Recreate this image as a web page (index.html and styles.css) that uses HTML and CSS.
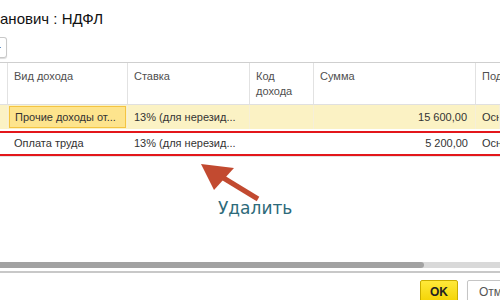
FILE: index.html
```html
<!DOCTYPE html>
<html>
<head>
<meta charset="utf-8">
<link rel="stylesheet" href="styles.css">
</head>
<body>
<div class="page">
  <div class="title">анович : НДФЛ</div>
  <div class="toolbar"><div class="tbtn"><span class="tdot"></span></div></div>
  <div class="grid">
    <div class="row head">
      <div class="c c0"></div>
      <div class="c c1">Вид дохода</div>
      <div class="c c2">Ставка</div>
      <div class="c c3">Код<br>дохода</div>
      <div class="c c4">Сумма</div>
      <div class="c c5">Под</div>
    </div>
    <div class="row sel">
      <div class="c c0"></div>
      <div class="c c1"><span class="cur">Прочие доходы от...</span></div>
      <div class="c c2">13% (для нерезид...</div>
      <div class="c c3"></div>
      <div class="c c4 num">15 600,00</div>
      <div class="c c5">Осн</div>
    </div>
    <div class="row r2">
      <div class="c c0"></div>
      <div class="c c1">Оплата труда</div>
      <div class="c c2">13% (для нерезид...</div>
      <div class="c c3"></div>
      <div class="c c4 num">5 200,00</div>
      <div class="c c5">Осн</div>
      <div class="redbox"></div>
    </div>
    <div class="empty">
      <svg class="arrow" width="70" height="45" viewBox="0 0 70 45">
        <line x1="12" y1="9" x2="58" y2="37" stroke="#c24a30" stroke-width="5"/>
        <polygon points="1,2 34,6 14,28" fill="#c24a30"/>
      </svg>
      <div class="note">Удалить</div>
    </div>
    <div class="scroll"><div class="thumb"></div></div>
  </div>
  <div class="footer">
    <div class="ok">OK</div>
    <div class="cancel">Отмена</div>
  </div>
</div>
</body>
</html>
```
FILE: styles.css
```css
html, body { margin: 0; padding: 0; background: #fff; }
.page { width: 500px; height: 300px; overflow: hidden; font-family: "Liberation Sans", Arial, sans-serif; position: relative; }
.title { font-size: 15px; color: #111; height: 30px; padding: 10px 0 0 0; box-sizing: border-box; line-height: 18px; }
.toolbar { height: 32px; padding-top: 7px; box-sizing: border-box; }
.tbtn { width: 9px; height: 21px; margin-left: -2px; border: 1px solid #c8c8c8; border-left: none; border-radius: 0 3px 3px 0; box-sizing: border-box; position: relative; box-shadow: 0 1px 1px rgba(0,0,0,0.15); }
.tdot { position: absolute; left: 1px; top: 9px; width: 2px; height: 1px; background: #5d8fc7; }
.grid { border-top: 1px solid #cfcfcf; }
.row { display: flex; position: relative; }
.c { box-sizing: border-box; font-size: 11px; color: #333; padding: 0 6px; white-space: nowrap; overflow: hidden; }
.c0 { width: 8px; padding: 0; }
.c1 { width: 120px; }
.c2 { width: 122px; }
.c3 { width: 64px; }
.c4 { width: 162px; }
.c5 { flex: 1; }
.head { height: 41px; border-bottom: 1px solid #e0e0e0; }
.head .c { color: #4f4f4f; padding-top: 6px; line-height: 15px; border-right: 1px solid #e2e2e2; }
.head .c5 { border-right: none; }
.sel { height: 24px; background: #fbf2c4; }
.sel .c { line-height: 24px; border-right: 1px solid #f6efd8; }
.sel .c1 { padding: 1px 1px; }
.cur { display: block; height: 22px; line-height: 20px; background: #fde48d; border: 1px solid #f4c442; box-sizing: border-box; padding: 0 5px; }
.num { text-align: right; padding-right: 8px; }
.r2 { height: 27px; border-bottom: 1px solid #e4e4e4; }
.r2 .c { line-height: 28px; }
.redbox { position: absolute; left: -2px; right: -2px; top: 2px; height: 21px; border: 2px solid #e3171b; border-right: none; }
.empty { height: 105px; position: relative; }
.arrow { position: absolute; left: 200px; top: 5px; }
.note { position: absolute; left: 218px; top: 41px; font-family: "DejaVu Sans", Verdana, sans-serif; font-size: 17px; color: #2d6a7a; }
.scroll { height: 6px; background: #d9d9d9; }
.thumb { width: 424px; height: 6px; background: #a2a2a2; border-radius: 0 3px 3px 0; }
.footer { border-top: 2px solid #c8c8c8; margin-top: 3px; display: flex; justify-content: flex-end; gap: 9px; padding-top: 7px; }
.ok { width: 38px; height: 24px; box-sizing: border-box; background: linear-gradient(#ffe93a, #f3d200); border: 1px solid #c9ad00; border-radius: 2px; font-weight: bold; font-size: 12px; text-align: center; line-height: 22px; color: #222; }
.cancel { width: 60px; margin-right: -27px; height: 24px; box-sizing: border-box; border: 1px solid #c5c5c5; border-radius: 2px; font-size: 12px; line-height: 22px; padding-left: 11px; color: #555; box-shadow: 0 1px 1px rgba(0,0,0,0.1); }
```
